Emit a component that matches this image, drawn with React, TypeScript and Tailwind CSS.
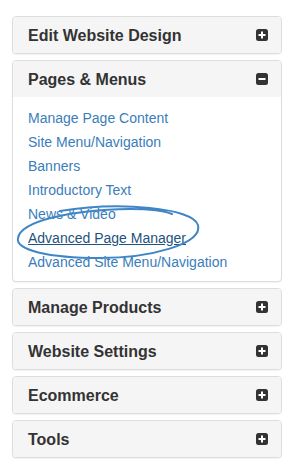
import type { ReactNode } from 'react'

const LINKS = [
  'Manage Page Content',
  'Site Menu/Navigation',
  'Banners',
  'Introductory Text',
  'News & Video',
  'Advanced Page Manager',
  'Advanced Site Menu/Navigation',
]

const ToggleIcon = ({ open }: { open: boolean }) => (
  <svg width="12" height="12" viewBox="0 0 12 12" className="shrink-0">
    <rect x="0" y="0" width="12" height="12" rx="2.5" fill="#333" />
    <rect x="2.5" y="5" width="7" height="2" fill="#fff" />
    {!open && <rect x="5" y="2.5" width="2" height="7" fill="#fff" />}
  </svg>
)

function Panel({ title, open = false, children }: { title: string; open?: boolean; children?: ReactNode }) {
  return (
    <div className="rounded-[4px] border border-[#ddd] bg-white shadow-[0_1px_1px_rgba(0,0,0,0.05)] overflow-hidden">
      <div className="flex h-[36px] items-center justify-between bg-[#f5f5f5] pl-[15px] pr-[13px]">
        <span className="pt-[2px] text-[16px] font-bold text-[#333]">{title}</span>
        <ToggleIcon open={open} />
      </div>
      {open && children}
    </div>
  )
}

export default function App() {
  return (
    <div className="min-h-[473px] bg-white px-[12px] pt-[16px] font-['Liberation_Sans',Arial,sans-serif]">
      <div className="flex flex-col gap-[6px]">
        <Panel title="Edit Website Design" />
        <Panel title="Pages & Menus" open>
          <div className="relative px-[15px] pt-[9px] pb-[7px]">
            <ul className="flex flex-col">
              {LINKS.map(link => (
                <li key={link} className="h-[24px] leading-[24px] text-[14px]">
                  {link === 'Advanced Page Manager' ? (
                    <a className="text-[#23527c] underline">{link}</a>
                  ) : (
                    <a className="text-[#3a7dbb]">{link}</a>
                  )}
                </li>
              ))}
            </ul>
            {/* hand-drawn highlight around the active link */}
            <svg className="pointer-events-none absolute left-0 top-0 h-full w-full overflow-visible">
              <path
                d="M 47 114 C 107 104, 180 111, 185 128 C 190 147, 137 161, 87 161 C 35 161, 2 153, 5 141 C 8 124, 57 113, 117 112 C 137 112, 152 114, 159 117"
                fill="none"
                stroke="#3f86c6"
                strokeWidth="2"
                strokeLinecap="round"
              />
            </svg>
          </div>
        </Panel>
        <Panel title="Manage Products" />
        <Panel title="Website Settings" />
        <Panel title="Ecommerce" />
        <Panel title="Tools" />
      </div>
    </div>
  )
}
